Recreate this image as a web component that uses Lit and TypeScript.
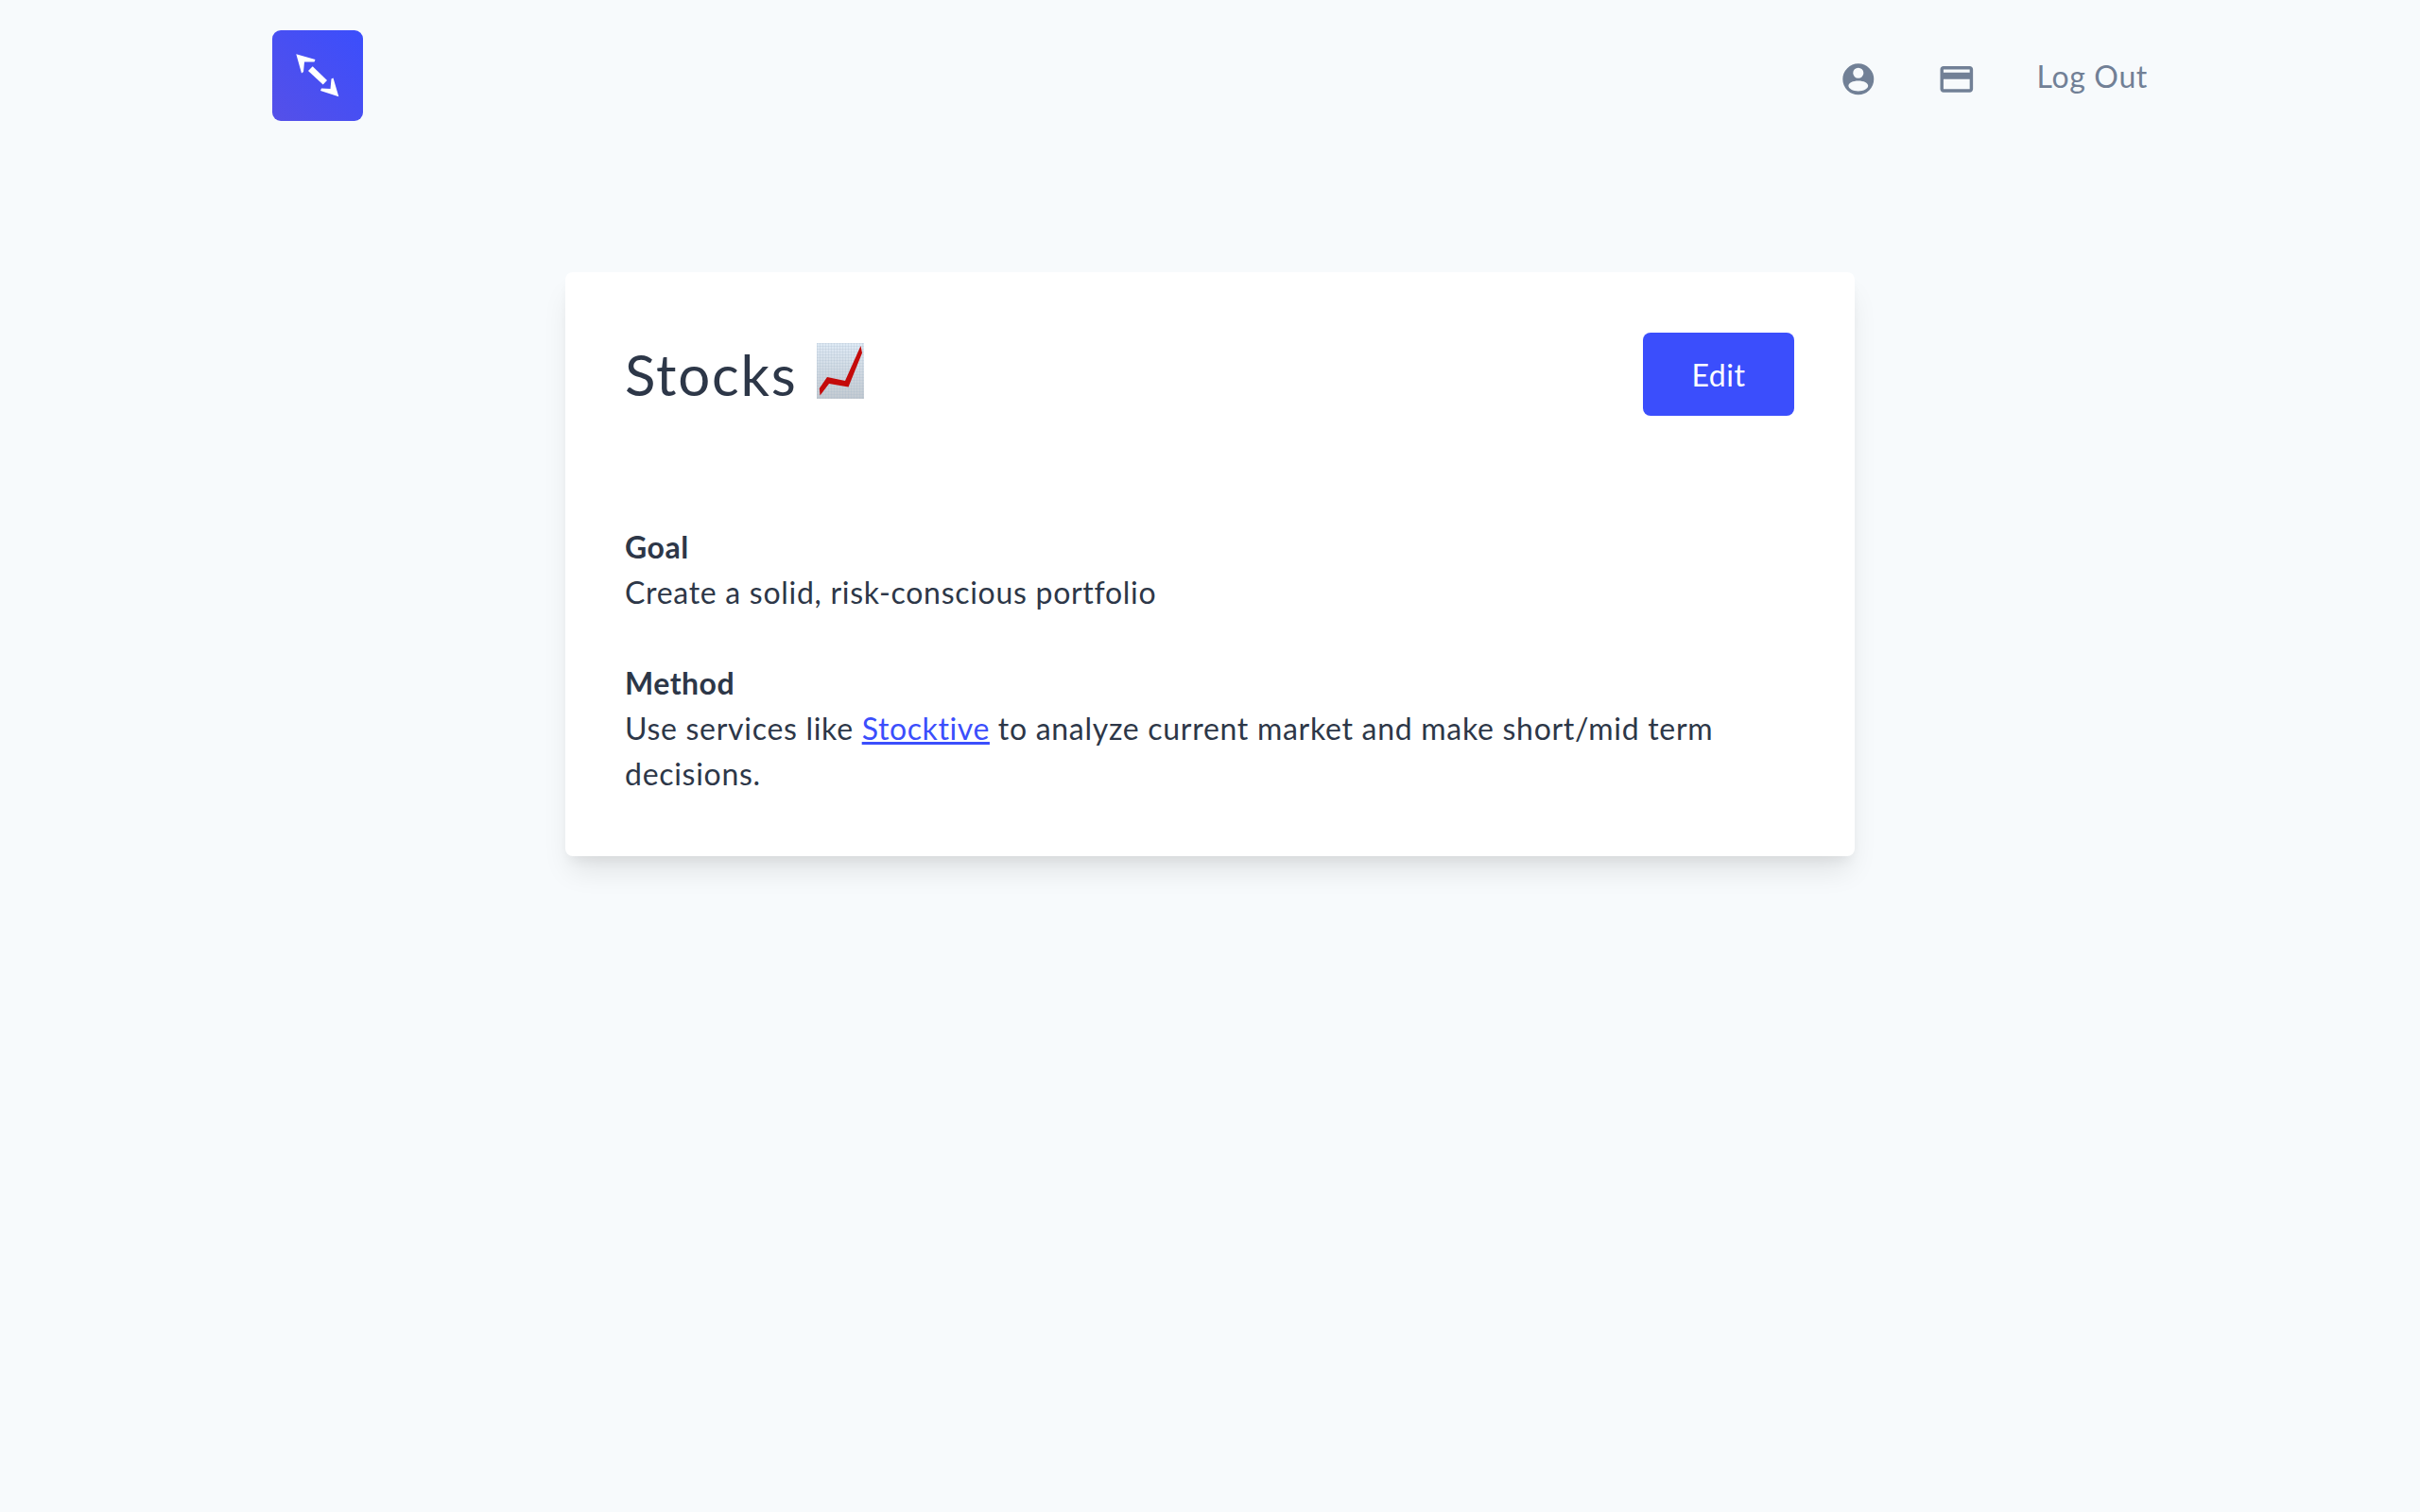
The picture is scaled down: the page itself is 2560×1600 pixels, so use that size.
import { LitElement, html, css } from "lit";
import { customElement } from "lit/decorators.js";

@customElement("app-root")
export class AppRoot extends LitElement {
  static styles = css`
    :host {
      display: block;
      min-height: 1600px;
      background: #f7fafc;
      color: #2d3748;
      font-family: "Lato", "Liberation Sans", sans-serif;
      font-size: 32px;
      line-height: 48px;
    }
    .nav {
      display: flex;
      align-items: center;
      justify-content: space-between;
      padding: 32px 288px 0;
      height: 96px;
    }
    .logo {
      display: block;
      width: 96px;
      height: 96px;
    }
    .links {
      display: flex;
      align-items: center;
      color: #718096;
    }
    .icon {
      display: block;
      width: 41.6px;
      height: 41.6px;
      fill: #718096;
      margin-top: 8px;
    }
    .icon.card {
      margin-left: 62px;
    }
    .logout {
      margin-left: 64px;
      padding-top: 2px;
      letter-spacing: 0.65px;
    }
    .card-box {
      box-sizing: border-box;
      width: 1364px;
      margin: 160px auto 0;
      padding: 64px 64px 63px 63px;
      background: #fff;
      border-radius: 8px;
      box-shadow: 0 20px 30px -6px rgba(0, 0, 0, 0.1), 0 8px 12px -4px rgba(0, 0, 0, 0.05);
    }
    .head {
      display: flex;
      justify-content: space-between;
      align-items: center;
      margin-bottom: 115px;
    }
    h1 {
      display: flex;
      align-items: flex-start;
      margin: 0;
      font-size: 60px;
      line-height: 88px;
      font-weight: 400;
      letter-spacing: 1.8px;
    }
    .emoji {
      display: block;
      width: 50px;
      height: 59px;
      margin: 11px 0 0 20px;
    }
    .btn {
      width: 160px;
      height: 88px;
      border: 0;
      border-radius: 8px;
      background: #3b4efc;
      color: #fff;
      font: inherit;
      letter-spacing: 0.5px;
      padding: 1px 0 0;
    }
    section + section {
      margin-top: 48px;
    }
    .label {
      font-weight: 700;
      letter-spacing: 0.5px;
    }
    p {
      margin: 0;
      letter-spacing: 0.71px;
    }
    a {
      color: #3b4efc;
      text-decoration: underline;
      letter-spacing: 0.6px;
    }
  `;

  render() {
    return html`
      <header class="nav">
        <svg class="logo" viewBox="0 0 96 96" aria-label="Logo">
          <defs>
            <linearGradient id="lg" x1="0" y1="1" x2="1" y2="0">
              <stop offset="0" stop-color="#5550e8" />
              <stop offset="1" stop-color="#3b4efc" />
            </linearGradient>
          </defs>
          <rect width="96" height="96" rx="9" fill="url(#lg)" />
          <g fill="#fff">
            <polygon points="25.3,25.3 45.5,31 44.5,33.5 34,33.5 33,44 31,45.5" />
            <polygon points="38,43 42.7,38.2 58,53 53.7,57.5" />
            <polygon points="70.3,70.3 51,64 52,61.5 61.5,62 62.5,51.5 64.5,50.5" />
          </g>
        </svg>
        <nav class="links">
          <svg class="icon" viewBox="0 0 24 24">
            <path
              fill-rule="evenodd"
              d="M12 2.5a9.5 9.5 0 1 0 0 19a9.5 9.500 0 0 0 0-19zM12 5a3.200 3.200 0 1 1 0 6.400a3.200 3.200 0 0 1 0-6.400zM12 13c3.300 0 6 1.300 6 3s-2.700 3.300-6 3.300s-6-1.600-6-3.300s2.700-3 6-3z"
            />
          </svg>
          <svg class="icon card" viewBox="0 0 24 24">
            <path
              d="M20 4H4c-1.110 0-1.990.89-1.990 2L2 18c0 1.110.89 2 2 2h16c1.110 0 2-.89 2-2V6c0-1.110-.89-2-2-2zm0 14H4v-6h16v6zm0-10H4V6h16v2z"
            />
          </svg>
          <span class="logout">Log Out</span>
        </nav>
      </header>
      <main class="card-box">
        <div class="head">
          <h1>
            Stocks
            <svg class="emoji" viewBox="0 0 50 59" aria-label="chart increasing">
              <defs>
                <linearGradient id="eg" x1="0" y1="0" x2="0" y2="1">
                  <stop offset="0" stop-color="#dfeaf5" />
                  <stop offset="1" stop-color="#c3cad1" />
                </linearGradient>
                <pattern id="ep" width="3" height="3" patternUnits="userSpaceOnUse">
                  <path d="M0 0H3M0 0V3" stroke="#a3b8cb" stroke-width="0.8" opacity="0.55" fill="none" />
                </pattern>
              </defs>
              <rect width="50" height="59" fill="url(#eg)" />
              <rect width="50" height="59" fill="url(#ep)" />
              <polygon points="3.500,55.500 2.800,48 11,36 30,40 46.500,3 48,10.500 33.500,46.500 13,43" fill="#c40a0a" />
            </svg>
          </h1>
          <button class="btn">Edit</button>
        </div>
        <section>
          <div class="label">Goal</div>
          <p>Create a solid, risk-conscious portfolio</p>
        </section>
        <section>
          <div class="label">Method</div>
          <p>
            Use services like <a href="#">Stocktive</a> to analyze current market and make short/mid term decisions.
          </p>
        </section>
      </main>
    `;
  }
}
